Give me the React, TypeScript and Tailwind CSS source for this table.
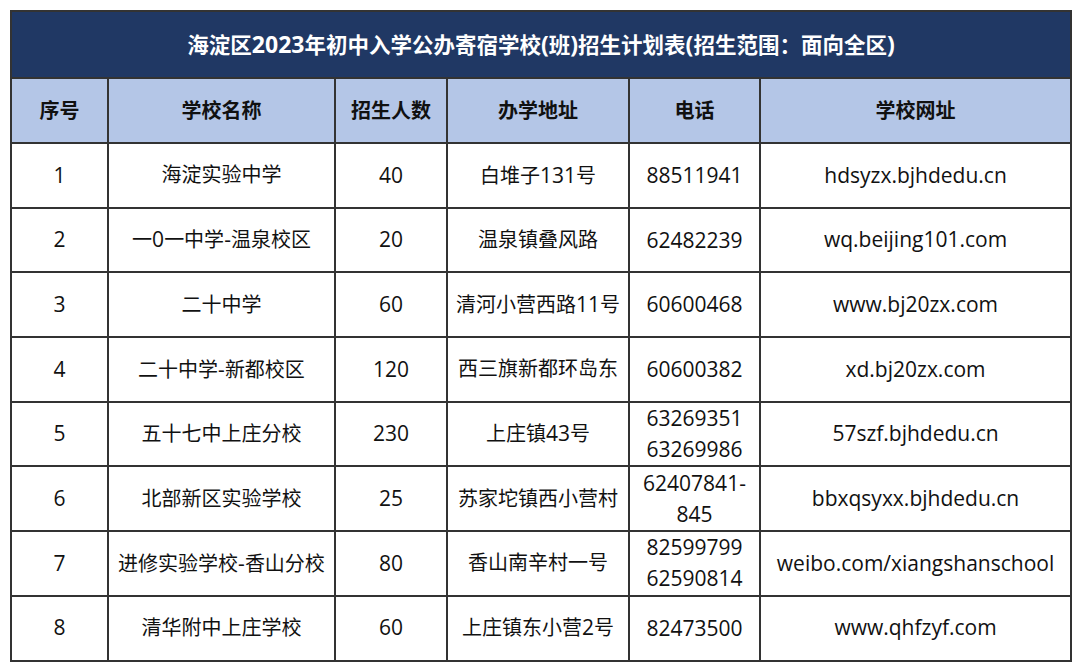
import React from "react";

const rows: [string, string, string, string, string[], string][] = [
  ["1", "海淀实验中学", "40", "白堆子131号", ["88511941"], "hdsyzx.bjhdedu.cn"],
  ["2", "一0一中学-温泉校区", "20", "温泉镇叠风路", ["62482239"], "wq.beijing101.com"],
  ["3", "二十中学", "60", "清河小营西路11号", ["60600468"], "www.bj20zx.com"],
  ["4", "二十中学-新都校区", "120", "西三旗新都环岛东", ["60600382"], "xd.bj20zx.com"],
  ["5", "五十七中上庄分校", "230", "上庄镇43号", ["63269351", "63269986"], "57szf.bjhdedu.cn"],
  ["6", "北部新区实验学校", "25", "苏家坨镇西小营村", ["62407841-", "845"], "bbxqsyxx.bjhdedu.cn"],
  ["7", "进修实验学校-香山分校", "80", "香山南辛村一号", ["82599799", "62590814"], "weibo.com/xiangshanschool"],
  ["8", "清华附中上庄学校", "60", "上庄镇东小营2号", ["82473500"], "www.qhfzyf.com"],
];

const headers = ["序号", "学校名称", "招生人数", "办学地址", "电话", "学校网址"];

function Mixed({ text, latin }: { text: string; latin: string }) {
  const parts = text.split(/([\x20-\x7E]+)/).filter((p) => p.length > 0);
  return (
    <>
      {parts.map((p, i) =>
        /^[\x20-\x7E]+$/.test(p) ? (
          <span key={i} className={latin}>
            {p}
          </span>
        ) : (
          <span key={i}>{p}</span>
        )
      )}
    </>
  );
}

export default function App() {
  const cell = "text-center border-2 border-[#333]";
  return (
    <div
      className="w-[1080px] h-[671px] bg-white pt-[10px] pl-[10px]"
      style={{ fontFamily: '"Open Sans", "Noto Sans CJK SC", sans-serif' }}
    >
      <table className="table-fixed border-collapse w-[1060px] border-2 border-[#333] text-[#111] text-[20px]">
        <colgroup>
          <col className="w-[97px]" />
          <col className="w-[227px]" />
          <col className="w-[112px]" />
          <col className="w-[182px]" />
          <col className="w-[131px]" />
          <col className="w-[311px]" />
        </colgroup>
        <tbody>
          <tr className="h-[67px]">
            <td
              colSpan={6}
              className="bg-[#203864] text-white font-bold text-[21.5px] text-center border-2 border-[#333]"
            >
              <Mixed
                text="海淀区2023年初中入学公办寄宿学校(班)招生计划表(招生范围：面向全区)"
                latin="text-[23px]"
              />
            </td>
          </tr>
          <tr className="h-[65px]">
            {headers.map((h) => (
              <td key={h} className={`bg-[#b4c6e7] font-bold text-[#111] ${cell}`}>
                {h}
              </td>
            ))}
          </tr>
          {rows.map((r) => (
            <tr key={r[0]} className="h-[64.7px]">
              <td className={cell}>
                <Mixed text={r[0]} latin="text-[21px]" />
              </td>
              <td className={cell}>
                <Mixed text={r[1]} latin="text-[21px]" />
              </td>
              <td className={cell}>
                <Mixed text={r[2]} latin="text-[21px]" />
              </td>
              <td className={cell}>
                <Mixed text={r[3]} latin="text-[21px]" />
              </td>
              <td className={`${cell} text-[21px] leading-[31px]`}>
                {r[4].map((p) => (
                  <div key={p}>{p}</div>
                ))}
              </td>
              <td className={`${cell} text-[21px]`}>{r[5]}</td>
            </tr>
          ))}
        </tbody>
      </table>
    </div>
  );
}
